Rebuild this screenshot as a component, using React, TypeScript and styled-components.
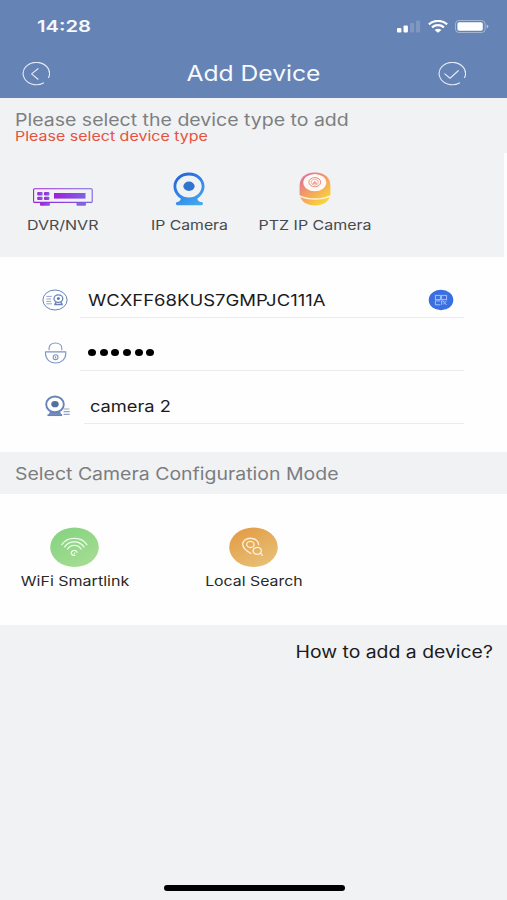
import React from "react";
import styled, { createGlobalStyle } from "styled-components";

const GlobalStyle = createGlobalStyle`
  * { box-sizing: border-box; }
  body { margin: 0; background: #f0f2f4; }
  svg { display: block; flex: none; }
`;

const Screen = styled.main`
  width: 507px;
  height: 900px;
  display: flex;
  flex-direction: column;
  background: #f0f2f4;
  font-family: Inter, "Liberation Sans", sans-serif;
  overflow: hidden;
`;

/* Extended lettering: every text run is widened horizontally. */
const Text = styled.span<{
  $size: number;
  $stretch: number;
  $color?: string;
  $weight?: number;
  $origin?: string;
  $line?: number;
}>`
  display: block;
  white-space: nowrap;
  font-size: ${(p) => p.$size}px;
  font-weight: ${(p) => p.$weight ?? 400};
  line-height: ${(p) => p.$line ?? 20}px;
  color: ${(p) => p.$color ?? "#1b1b1c"};
  transform: scaleX(${(p) => p.$stretch});
  transform-origin: ${(p) => p.$origin ?? "left"} center;
`;

const Header = styled.header`
  height: 98px;
  flex: none;
  background: #6583b5;
`;

const StatusBar = styled.div`
  height: 51px;
  padding: 1px 18px 0 37px;
  display: flex;
  align-items: center;
  justify-content: space-between;
`;

const StatusIcons = styled.div`
  display: flex;
  align-items: center;
  gap: 7px;
`;

const NavBar = styled.div`
  height: 45px;
  padding: 0 41px 0 22px;
  display: grid;
  grid-template-columns: 28px 1fr 28px;
  align-items: center;
`;

const NavTitle = styled.div`
  display: flex;
  justify-content: center;
  padding: 0 0 1px 18px;
`;

const TypeSection = styled.section`
  height: 159px;
  flex: none;
  display: flex;
  flex-direction: column;
`;

const TypePrompt = styled.div`
  height: 55px;
  padding: 12px 15px 0;
`;

const TypeGrid = styled.div`
  flex: 1;
  display: grid;
  grid-template-columns: repeat(4, 126px);
  border-right: 3px solid #fdfdfd;
`;

const TypeItem = styled.div`
  padding-top: 19px;
  display: flex;
  flex-direction: column;
  align-items: center;
`;

const TypeIcon = styled.div`
  height: 34px;
  margin-bottom: 9px;
  display: flex;
  align-items: flex-end;
`;

const Form = styled.section`
  height: 195px;
  flex: none;
  padding-top: 8px;
  background: #fefefe;
`;

const Field = styled.div`
  height: 53px;
  display: flex;
  padding-left: 42px;
`;

const FieldIcon = styled.div`
  width: 38px;
  padding-top: 24px;
`;

const FieldBody = styled.div<{ $start?: number; $inset?: number; $top?: number }>`
  width: ${(p) => 384 - (p.$start ?? 0)}px;
  margin-left: ${(p) => p.$start ?? 0}px;
  padding: ${(p) => p.$top ?? 17}px 10px 0 ${(p) => p.$inset ?? 8}px;
  display: flex;
  align-items: center;
  justify-content: space-between;
  border-bottom: 1px solid #e9ebed;
`;

const Dots = styled.div`
  display: flex;
  gap: 3.8px;
`;

const Dot = styled.i`
  width: 7.9px;
  height: 7px;
  border-radius: 50%;
  background: #000;
`;

const ModeHeading = styled.h2`
  margin: 0;
  height: 42px;
  flex: none;
  padding: 2px 15px 0;
  display: flex;
  align-items: center;
`;

const ModeSection = styled.section`
  height: 131px;
  flex: none;
  display: flex;
  gap: 70px;
  padding: 33px 20px 0;
  background: #fefefe;
`;

const ModeItem = styled.div`
  width: 109px;
  display: flex;
  flex-direction: column;
  align-items: center;
  gap: 4px;
`;

const Help = styled.div`
  flex: 1;
  padding: 17px 14px 0;
  display: flex;
  justify-content: flex-end;
  align-items: flex-start;
`;

const HomeBar = styled.div`
  width: 181px;
  height: 6px;
  flex: none;
  margin: 0 auto 9px 163.5px;
  border-radius: 3px;
  background: #000;
`;

const RingIcon = ({ children }: { children: React.ReactNode }) => (
  <svg width="28" height="24" viewBox="0.7 0 28 24" fill="none" stroke="#e3eaf7" strokeWidth="1.15" strokeLinecap="round" strokeLinejoin="round">
    <path d="M22.2 20.9A13.2 11.2 0 1 1 27.3 15.6" />
    {children}
  </svg>
);

const SignalIcon = () => (
  <svg width="24" height="13" viewBox="0 0 24 13" fill="#fff">
    <rect x="0" y="8" width="4.4" height="4.6" rx="1" />
    <rect x="6.5" y="5.6" width="4.4" height="7" rx="1" />
    <rect x="13" y="3" width="4.2" height="9.6" rx="1" opacity=".17" />
    <rect x="19" y=".4" width="4.2" height="12.2" rx="1" opacity=".17" />
  </svg>
);

const StatusWifiIcon = () => (
  <svg width="20" height="13" viewBox="0 0 20 13" fill="none" stroke="#fff" strokeWidth="2.3">
    <path d="M.9 4.4C6-.2 14-.2 19.1 4.4" />
    <path d="M4 7.3C7.4 4.5 12.6 4.5 16 7.3" />
    <path d="M10 12.8 6.6 10C8.5 8.4 11.5 8.4 13.4 10Z" fill="#fff" stroke="none" />
  </svg>
);

const BatteryIcon = () => (
  <svg width="34" height="13" viewBox="0 0 34 13">
    <rect x=".5" y=".5" width="29.6" height="12" rx="3.4" fill="none" stroke="#fff" opacity=".4" />
    <rect x="2.4" y="2.3" width="25.4" height="8.4" rx="1.8" fill="#fff" />
    <path d="M31.6 4.4Q33.4 5 33.4 6.5T31.6 8.6Z" fill="#fff" opacity=".5" />
  </svg>
);

const DvrIcon = () => (
  <svg width="60" height="18" viewBox="0 0 60 18">
    <defs>
      <linearGradient id="dvr" x1="0" x2="1">
        <stop offset="0" stopColor="#a01fd8" />
        <stop offset="1" stopColor="#7c63e6" />
      </linearGradient>
    </defs>
    <g fill="url(#dvr)">
      <rect x="7" y="14.5" width="10" height="3.2" rx="1" />
      <rect x="43.5" y="14.5" width="9.5" height="3.2" rx="1" fill="#8464dc" />
      <rect x="4.2" y="4" width="5.4" height="3.4" rx="1" />
      <rect x="11" y="4" width="5.4" height="3.4" rx="1" />
      <rect x="4.2" y="8.7" width="5.4" height="3.4" rx="1" />
      <rect x="11" y="8.7" width="5.4" height="3.4" rx="1" />
      <rect x="21" y="5" width="31.5" height="5.6" />
    </g>
    <rect x=".6" y=".8" width="58.6" height="13.6" rx="1" fill="none" stroke="url(#dvr)" strokeWidth="1.1" />
  </svg>
);

const IpCameraIcon = () => (
  <svg width="32" height="34" viewBox="0 0 32 34">
    <defs>
      <linearGradient id="ipc" x1=".2" y1="0" x2=".8" y2="1">
        <stop offset="0" stopColor="#2462dc" />
        <stop offset="1" stopColor="#43a9f0" />
      </linearGradient>
    </defs>
    <path
      fill="url(#ipc)"
      fillRule="evenodd"
      d="M16 .4C24.5.4 31.5 6.6 31.5 14.2C31.5 19.4 28.4 23.8 24.4 26.6Q24.6 29.6 27.6 30H28.6Q30 30 30 31.6T28.4 33.2H4.2Q2.8 33.2 2.8 31.6T4.4 30Q7.6 29.6 7.8 26.6C3.7 24.2.5 19.6.5 14.2C.5 6.6 7.5.4 16 .4ZM16 3.4C8.9 3.4 3.3 8.2 3.3 14.3S8.9 25.6 16 25.6S28.7 20.4 28.7 14.3S23.1 3.4 16 3.4Z"
    />
    <ellipse cx="16" cy="14.3" rx="5.6" ry="4.7" fill="#2f74cf" />
  </svg>
);

const PtzCameraIcon = () => (
  <svg width="32" height="34" viewBox="0 0 32 34">
    <defs>
      <linearGradient id="ptz" x1=".15" y1=".1" x2=".75" y2=".9">
        <stop offset="0" stopColor="#e07593" />
        <stop offset=".55" stopColor="#f5a45e" />
        <stop offset="1" stopColor="#f8d337" />
      </linearGradient>
    </defs>
    <path fill="url(#ptz)" d="M16 .5C26 .5 31.4 6 31.4 14V22.5Q29 33.4 16 33.4T.6 22.5V14C.6 6 6 .5 16 .5Z" />
    <path d="M.4 23.8Q7 27 16 27T31.6 23.8" fill="none" stroke="#fff1dc" strokeWidth="1.3" />
    <ellipse cx="15.8" cy="10.6" rx="11.5" ry="8.7" fill="#fff8f4" />
    <g fill="none" stroke="#e98c80" strokeWidth="1">
      <ellipse cx="15.8" cy="10.2" rx="5.9" ry="4.6" />
      <ellipse cx="15.8" cy="10.2" rx="3.6" ry="2.9" opacity=".6" />
      <path d="M13.8 11.6 15.8 9.2 17.8 11.6Z" fill="#f0a392" strokeWidth=".6" />
    </g>
  </svg>
);

const IdIcon = () => (
  <svg width="26" height="22" viewBox="0 0 26 22" fill="none" stroke="#6883b8" strokeWidth="1">
    <ellipse cx="13" cy="11" rx="12.1" ry="10" />
    <path d="M4.4 7.4H9.8M4.4 10H9M4.4 12.4H9M4.4 14.8H9.8" stroke="#91a5cc" />
    <ellipse cx="16.4" cy="9.6" rx="4.4" ry="3.8" strokeWidth="1.3" />
    <ellipse cx="16.4" cy="9.6" rx="1.5" ry="1.3" fill="#5573af" stroke="none" />
    <path d="M12.2 15.5H20.8M14 13.2 13 15.4M19 13.2 20 15.4" strokeWidth="1.5" />
  </svg>
);

const LockIcon = () => (
  <svg width="26" height="22" viewBox="0 0 26 22" fill="none" stroke="#7f94bf" strokeWidth="1.1" strokeLinejoin="round">
    <path d="M7.1 8.2V6.2C7.1 3 9.8 1 13.4 1S19.8 3 19.8 6.2V8.2" />
    <path d="M3.5 9.9H23.8V11.6C23.8 17 19.4 21 13.6 21S3.5 17 3.5 11.6Z" />
    <ellipse cx="13.6" cy="15.2" rx="2.4" ry="2.4" />
    <path d="M13.6 14.2V16.2" />
  </svg>
);

const NameIcon = () => (
  <svg width="29" height="22" viewBox="0 0 29 22" fill="none" stroke="#6883b8">
    <path d="M8.2 16 6.6 19.6H19.4L17.8 16Z" fill="#6f8bc0" stroke="none" />
    <ellipse cx="13" cy="9.4" rx="8.8" ry="7.9" strokeWidth="1.9" fill="#fefefe" />
    <ellipse cx="13" cy="9.2" rx="3.7" ry="3.1" fill="#526f9f" stroke="none" />
    <path d="M5.5 20.1H20.2" strokeWidth="1.9" />
    <path d="M21.6 14H27.4M21.6 16.7H27.8M21.6 19.4H27.6" stroke="#91a3c6" strokeWidth="1.2" />
  </svg>
);

const ScanIcon = () => (
  <svg width="26" height="22" viewBox="0 0 26 22" fill="none" stroke="#a9bff4" strokeWidth="1">
    <ellipse cx="13" cy="11" rx="12.3" ry="10.2" fill="#3a6fe2" stroke="none" />
    <rect x="7.4" y="6.4" width="5" height="4.2" />
    <rect x="13.6" y="6.4" width="5" height="4.2" />
    <path d="M12.4 11.9H7.4V15.8H12.4M13.6 15.8V12H15.4L16.2 13.6 18.6 12M15.4 15.4 16.6 13.8 18.6 16" />
  </svg>
);

const SmartlinkIcon = () => (
  <svg width="49" height="40" viewBox="0 0 49 40" fill="none" stroke="#efffec" strokeWidth="1.25" strokeLinecap="round">
    <defs>
      <linearGradient id="wifi" x1=".2" y1="0" x2=".8" y2="1">
        <stop offset="0" stopColor="#86d381" />
        <stop offset="1" stopColor="#a5dd93" />
      </linearGradient>
    </defs>
    <ellipse cx="24.5" cy="20.3" rx="24.3" ry="19.7" fill="url(#wifi)" stroke="none" />
    <path d="M11.8 17.6C14.5 13.7 19 11.4 24.3 11.4S34.2 13.7 36.9 17.6" />
    <path d="M14.7 19.9C16.9 16.6 20.2 14.9 24.3 14.9S31.8 16.6 34 19.9" />
    <path d="M17.6 22C19.2 19.5 21.4 18.3 24.3 18.3S29.5 19.5 31.1 22" />
    <path d="M24.9 28.2A2.9 2.4 0 1 1 27 25.4M24.4 26.2H24.6" />
  </svg>
);

const LocalSearchIcon = () => (
  <svg width="49" height="40" viewBox="0 0 49 40" fill="none" stroke="#fff0d8" strokeWidth="1.35" strokeLinecap="round">
    <defs>
      <linearGradient id="local" x1=".2" y1="0" x2=".8" y2="1">
        <stop offset="0" stopColor="#e39c45" />
        <stop offset="1" stopColor="#e7c178" />
      </linearGradient>
    </defs>
    <ellipse cx="24.5" cy="20.3" rx="24.3" ry="19.7" fill="url(#local)" stroke="none" />
    <path d="M22 26.5C17.4 24 13.7 21.1 13.7 17.3C13.7 13.9 17 11.2 21.4 11.2S29.4 13.9 29.7 17.6" />
    <ellipse cx="21.4" cy="17.4" rx="3.7" ry="3.1" />
    <ellipse cx="28.2" cy="23.8" rx="4.1" ry="3.5" />
    <path d="M31.6 26.2 33.3 28.4" />
  </svg>
);

export default function App() {
  return (
    <>
      <GlobalStyle />
      <Screen>
        <Header>
          <StatusBar>
            <Text $size={16.3} $stretch={1.24} $weight={600} $color="#f5f8fd">14:28</Text>
            <StatusIcons>
              <SignalIcon />
              <StatusWifiIcon />
              <BatteryIcon />
            </StatusIcons>
          </StatusBar>
          <NavBar>
            <RingIcon><path d="M16.7 6.7 10.3 11.9 16.7 17.2" /></RingIcon>
            <NavTitle>
              <Text $size={21.5} $stretch={1.146} $origin="center" $color="#f6f9fe" $line={26}>Add Device</Text>
            </NavTitle>
            <RingIcon><path d="M7.5 11.9 12.7 16.2 21 8.7" /></RingIcon>
          </NavBar>
        </Header>

        <TypeSection>
          <TypePrompt>
            <Text $size={17.1} $stretch={1.141} $color="#7d7f81">Please select the device type to add</Text>
            <Text $size={13.1} $stretch={1.221} $color="#e6523e" $line={13}>Please select device type</Text>
          </TypePrompt>
          <TypeGrid>
            <TypeItem>
              <TypeIcon><DvrIcon /></TypeIcon>
              <Text $size={13.3} $stretch={1.203} $origin="center" $color="#48494c">DVR/NVR</Text>
            </TypeItem>
            <TypeItem>
              <TypeIcon><IpCameraIcon /></TypeIcon>
              <Text $size={13.3} $stretch={1.187} $origin="center" $color="#48494c">IP Camera</Text>
            </TypeItem>
            <TypeItem>
              <TypeIcon><PtzCameraIcon /></TypeIcon>
              <Text $size={13.3} $stretch={1.2} $origin="center" $color="#48494c">PTZ IP Camera</Text>
            </TypeItem>
          </TypeGrid>
        </TypeSection>

        <Form>
          <Field>
            <FieldIcon><IdIcon /></FieldIcon>
            <FieldBody>
              <Text $size={16} $stretch={1.156}>WCXFF68KUS7GMPJC111A</Text>
              <ScanIcon />
            </FieldBody>
          </Field>
          <Field>
            <FieldIcon><LockIcon /></FieldIcon>
            <FieldBody>
              <Dots><Dot /><Dot /><Dot /><Dot /><Dot /><Dot /></Dots>
            </FieldBody>
          </Field>
          <Field>
            <FieldIcon><NameIcon /></FieldIcon>
            <FieldBody $start={4} $inset={6} $top={19}>
              <Text $size={15.8} $stretch={1.155}>camera 2</Text>
            </FieldBody>
          </Field>
        </Form>

        <ModeHeading>
          <Text $size={17.1} $stretch={1.139} $color="#7b7d80">Select Camera Configuration Mode</Text>
        </ModeHeading>
        <ModeSection>
          <ModeItem>
            <SmartlinkIcon />
            <Text $size={13.3} $stretch={1.206} $origin="center" $color="#29292a">WiFi Smartlink</Text>
          </ModeItem>
          <ModeItem>
            <LocalSearchIcon />
            <Text $size={13.3} $stretch={1.192} $origin="center" $color="#29292a">Local Search</Text>
          </ModeItem>
        </ModeSection>

        <Help>
          <Text $size={16.8} $stretch={1.155} $origin="right">How to add a device?</Text>
        </Help>
        <HomeBar />
      </Screen>
    </>
  );
}
